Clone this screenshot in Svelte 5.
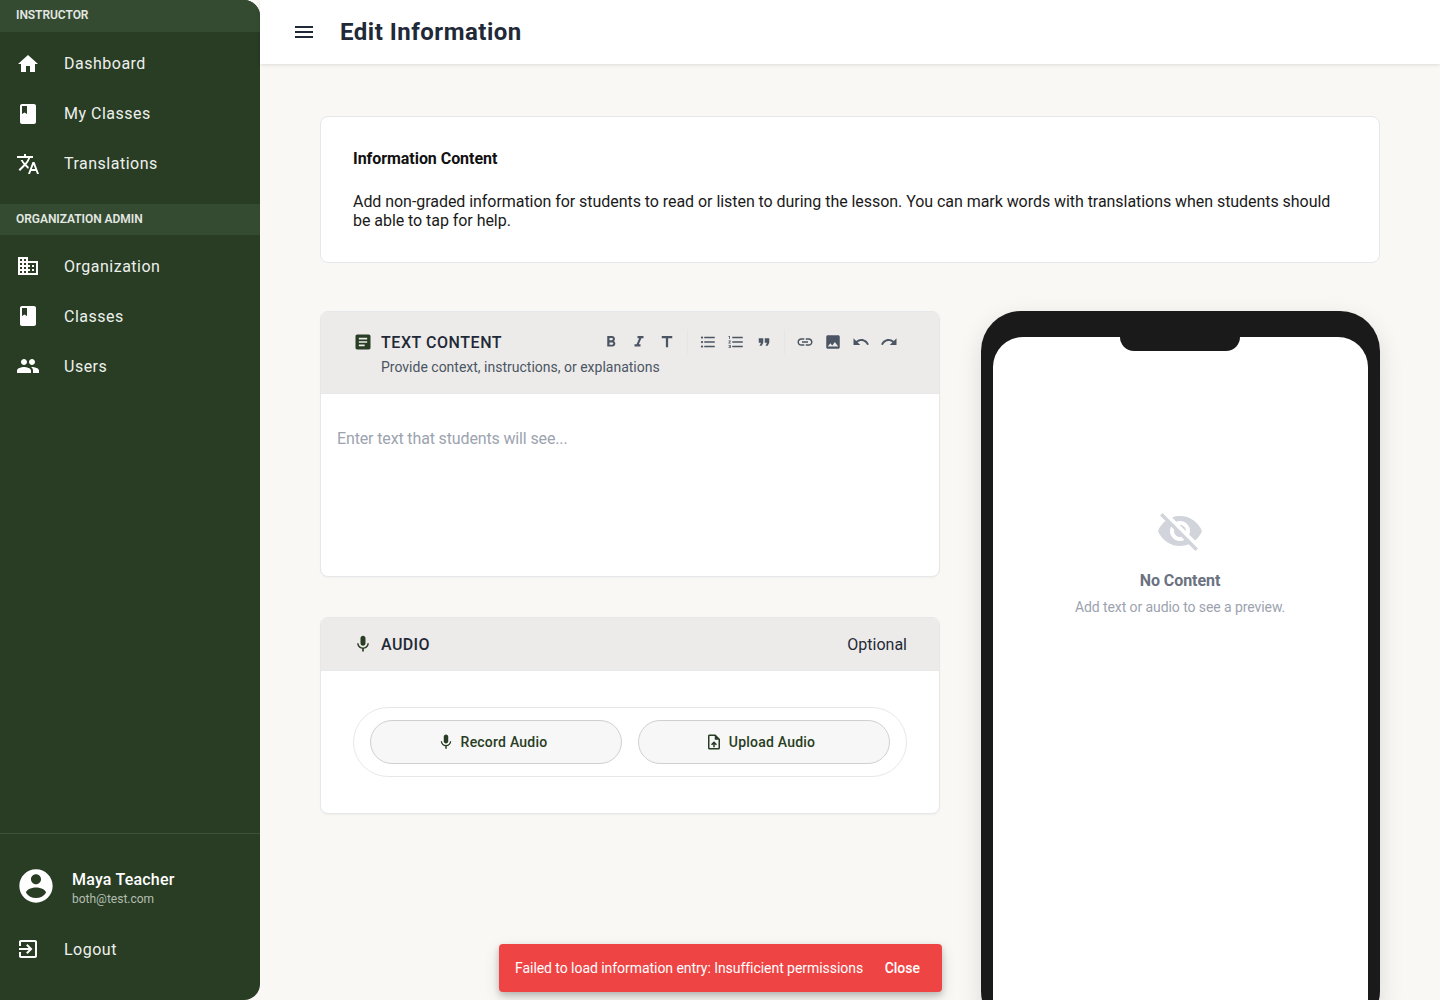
<script>
  const P = {
    home: "M10 20v-6h4v6h5v-8h3L12 3 2 12h3v8z",
    book: "M18 2H6c-1.1 0-2 .9-2 2v16c0 1.1.9 2 2 2h12c1.1 0 2-.9 2-2V4c0-1.1-.9-2-2-2zM6 4h5v8l-2.5-1.5L6 12V4z",
    translate: "M12.87 15.07l-2.54-2.51.03-.03c1.74-1.94 2.98-4.17 3.71-6.53H17V4h-7V2H8v2H1v1.99h11.17C11.5 7.92 10.44 9.75 9 11.35 8.07 10.32 7.3 9.19 6.69 8h-2c.73 1.63 1.73 3.17 2.98 4.56l-5.09 5.02L4 19l5-5 3.11 3.11.76-2.04zM18.5 10h-2L12 22h2l1.12-3h4.75L21 22h2l-4.5-12zm-2.62 7l1.62-4.33L19.12 17h-3.24z",
    domain: "M12 7V3H2v18h20V7H12zM6 19H4v-2h2v2zm0-4H4v-2h2v2zm0-4H4V9h2v2zm0-4H4V5h2v2zm4 12H8v-2h2v2zm0-4H8v-2h2v2zm0-4H8V9h2v2zm0-4H8V5h2v2zm10 12h-8v-2h2v-2h-2v-2h2v-2h-2V9h8v10zm-2-8h-2v2h2v-2zm0 4h-2v2h2v-2z",
    people: "M16 11c1.66 0 2.99-1.34 2.99-3S17.66 5 16 5c-1.66 0-3 1.34-3 3s1.34 3 3 3zm-8 0c1.66 0 2.99-1.34 2.99-3S9.66 5 8 5C6.34 5 5 6.34 5 8s1.34 3 3 3zm0 2c-2.33 0-7 1.17-7 3.5V19h14v-2.5c0-2.33-4.67-3.5-7-3.5zm8 0c-.29 0-.62.02-.97.05 1.16.84 1.97 1.97 1.97 3.45V19h6v-2.5c0-2.33-4.67-3.5-7-3.5z",
    account: "M12 2C6.48 2 2 6.48 2 12s4.48 10 10 10 10-4.48 10-10S17.52 2 12 2zm0 3c1.66 0 3 1.34 3 3s-1.34 3-3 3-3-1.34-3-3 1.34-3 3-3zm0 14.2c-2.5 0-4.71-1.28-6-3.22.03-1.99 4-3.08 6-3.08 1.99 0 5.97 1.09 6 3.08-1.29 1.94-3.5 3.22-6 3.22z",
    exit: "M10.09 15.59L11.5 17l5-5-5-5-1.41 1.41L12.67 11H3v2h9.67l-2.58 2.59zM19 3H5c-1.11 0-2 .9-2 2v4h2V5h14v14H5v-4H3v4c0 1.1.89 2 2 2h14c1.1 0 2-.9 2-2V5c0-1.1-.9-2-2-2z",
    menu: "M3 18h18v-2H3v2zm0-5h18v-2H3v2zm0-7v2h18V6H3z",
    article: "M19 3H5c-1.1 0-2 .9-2 2v14c0 1.1.9 2 2 2h14c1.1 0 2-.9 2-2V5c0-1.1-.9-2-2-2zm-5 14H7v-2h7v2zm3-4H7v-2h10v2zm0-4H7V7h10v2z",
    bold: "M15.6 10.79c.97-.67 1.65-1.77 1.65-2.79 0-2.26-1.75-4-4-4H7v14h7.04c2.09 0 3.71-1.7 3.71-3.79 0-1.52-.86-2.82-2.15-3.42zM10 6.5h3c.83 0 1.5.67 1.5 1.5s-.67 1.5-1.5 1.5h-3v-3zm3.5 9H10v-3h3.5c.83 0 1.5.67 1.5 1.5s-.67 1.5-1.5 1.5z",
    italic: "M10 4v3h2.21l-3.42 8H6v3h8v-3h-2.21l3.42-8H18V4z",
    title: "M5 4v3h5.5v12h3V7H19V4z",
    bullets: "M4 10.5c-.83 0-1.5.67-1.5 1.5s.67 1.5 1.5 1.5 1.5-.67 1.5-1.5-.67-1.5-1.5-1.5zm0-6c-.83 0-1.5.67-1.5 1.5S3.17 7.5 4 7.5 5.5 6.83 5.5 6 4.83 4.5 4 4.5zm0 12c-.83 0-1.5.68-1.5 1.5s.68 1.5 1.5 1.5 1.5-.68 1.5-1.5-.67-1.5-1.5-1.5zM7 19h14v-2H7v2zm0-6h14v-2H7v2zm0-8v2h14V5H7z",
    numbered: "M2 17h2v.5H3v1h1v.5H2v1h3v-4H2v1zm1-9h1V4H2v1h1v3zm-1 3h1.8L2 13.1v.9h3v-1H3.2L5 10.9V10H2v1zm5-6v2h14V5H7zm0 14h14v-2H7v2zm0-6h14v-2H7v2z",
    quote: "M6 17h3l2-4V7H5v6h3zm8 0h3l2-4V7h-6v6h3z",
    link: "M3.9 12c0-1.71 1.39-3.1 3.1-3.1h4V7H7c-2.76 0-5 2.24-5 5s2.24 5 5 5h4v-1.9H7c-1.71 0-3.1-1.39-3.1-3.1zM8 13h8v-2H8v2zm9-6h-4v1.9h4c1.71 0 3.1 1.39 3.1 3.1s-1.39 3.1-3.1 3.1h-4V17h4c2.76 0 5-2.24 5-5s-2.24-5-5-5z",
    image: "M21 19V5c0-1.1-.9-2-2-2H5c-1.1 0-2 .9-2 2v14c0 1.1.9 2 2 2h14c1.1 0 2-.9 2-2zM8.5 13.5l2.5 3.01L14.5 12l4.5 6H5l3.5-4.5z",
    undo: "M12.5 8c-2.65 0-5.05.99-6.9 2.6L2 7v9h9l-3.62-3.62c1.39-1.16 3.16-1.88 5.12-1.88 3.54 0 6.55 2.31 7.6 5.5l2.37-.78C21.08 11.03 17.15 8 12.5 8z",
    redo: "M18.4 10.6C16.55 8.99 14.15 8 11.5 8c-4.65 0-8.58 3.03-9.96 7.22L3.9 16c1.05-3.19 4.05-5.5 7.6-5.5 1.95 0 3.73.72 5.12 1.88L13 16h9V7l-3.6 3.6z",
    mic: "M12 14c1.66 0 2.99-1.34 2.99-3L15 5c0-1.66-1.34-3-3-3S9 3.34 9 5v6c0 1.66 1.34 3 3 3zm5.3-3c0 3-2.54 5.1-5.3 5.1S6.7 14 6.7 11H5c0 3.41 2.72 6.23 6 6.72V21h2v-3.28c3.28-.48 6-3.3 6-6.72h-1.7z",
    upload: "M14 2H6c-1.1 0-1.99.9-1.99 2L4 20c0 1.1.89 2 1.99 2H18c1.1 0 2-.9 2-2V8l-6-6zm4 18H6V4h7v5h5v11zM8 15.01l1.41 1.41L11 14.84V19h2v-4.16l1.59 1.59L16 15.01 12.01 11 8 15.01z",
    eyeoff: "M12 7c2.76 0 5 2.24 5 5 0 .65-.13 1.26-.36 1.83l2.92 2.92c1.51-1.26 2.7-2.89 3.43-4.75-1.73-4.39-6-7.5-11-7.5-1.4 0-2.74.25-3.98.7l2.16 2.16C10.74 7.13 11.35 7 12 7zM2 4.27l2.28 2.28.46.46C3.08 8.3 1.78 10.02 1 12c1.73 4.39 6 7.5 11 7.5 1.55 0 3.03-.3 4.38-.84l.42.42L19.73 22 21 20.73 3.27 3 2 4.27zM7.53 9.8l1.55 1.55c-.05.21-.08.43-.08.65 0 1.66 1.34 3 3 3 .22 0 .44-.03.65-.08l1.55 1.55c-.67.33-1.41.53-2.2.53-2.76 0-5-2.24-5-5 0-.79.2-1.53.53-2.2zm4.31-.78l3.15 3.15.02-.16c0-1.66-1.34-3-3-3l-.17.01z"
  };
  const instructor = [["home","Dashboard"],["book","My Classes"],["translate","Translations"]];
  const admin = [["domain","Organization"],["book","Classes"],["people","Users"]];
  const tools = [["bold","italic","title"],["bullets","numbered","quote"],["link","image","undo","redo"]];
</script>

{#snippet icon(name, size, cls)}
  <svg class={cls} width={size} height={size} viewBox="0 0 24 24" fill="currentColor" aria-hidden="true"><path d={P[name]} /></svg>
{/snippet}

<div class="app">
  <aside class="side">
    <div class="sect">INSTRUCTOR</div>
    <nav class="list first">
      {#each instructor as [i, label]}
        <div class="item">{@render icon(i, 24, "ni")}<span>{label}</span></div>
      {/each}
    </nav>
    <div class="sect">ORGANIZATION ADMIN</div>
    <nav class="list">
      {#each admin as [i, label]}
        <div class="item">{@render icon(i, 24, "ni")}<span>{label}</span></div>
      {/each}
    </nav>
    <div class="foot">
      <div class="profile">
        {@render icon("account", 40, "avatar")}
        <div class="who">
          <div class="name">Maya Teacher</div>
          <div class="mail">both@test.com</div>
        </div>
      </div>
      <div class="item">{@render icon("exit", 24, "ni")}<span>Logout</span></div>
    </div>
  </aside>

  <div class="main">
    <header class="top">
      {@render icon("menu", 24, "burger")}
      <h1>Edit Information</h1>
    </header>
    <div class="content">
      <section class="intro">
        <h2>Information Content</h2>
        <p>Add non-graded information for students to read or listen to during the lesson. You can mark words with translations when students should be able to tap for help.</p>
      </section>
      <div class="cols">
        <div class="left">
          <section class="card">
            <div class="chead text">
              <div class="crow">
                {@render icon("article", 20, "cicon")}
                <span class="ctitle">TEXT CONTENT</span>
                <div class="tools">
                  {#each tools as group}
                    <div class="group">
                      {#each group as t}
                        <span class="tool">{@render icon(t, 18, "")}</span>
                      {/each}
                    </div>
                  {/each}
                </div>
              </div>
              <div class="csub">Provide context, instructions, or explanations</div>
            </div>
            <div class="editor">Enter text that students will see...</div>
          </section>
          <section class="card">
            <div class="chead audio">
              {@render icon("mic", 20, "cicon")}
              <span class="ctitle">AUDIO</span>
              <span class="opt">Optional</span>
            </div>
            <div class="abody">
              <div class="pill">
                <button>{@render icon("mic", 18, "")}Record Audio</button>
                <button>{@render icon("upload", 18, "")}Upload Audio</button>
              </div>
            </div>
          </section>
        </div>
        <div class="phone">
          <div class="screen">
            <div class="notch"></div>
            <div class="empty">
              {@render icon("eyeoff", 48, "eye")}
              <div class="nc">No Content</div>
              <div class="ns">Add text or audio to see a preview.</div>
            </div>
          </div>
        </div>
      </div>
    </div>
  </div>

  <div class="snack">
    <span>Failed to load information entry: Insufficient permissions</span>
    <b>Close</b>
  </div>
</div>

<style>
  :global(body) { margin: 0; font-family: Roboto, "Liberation Sans", sans-serif; }
  .app { display: flex; height: 1000px; overflow: hidden; background: #faf8f5; position: relative; }
  .side { width: 260px; flex: none; background: #283d24; color: #fff; border-radius: 0 16px 16px 0; display: flex; flex-direction: column; overflow: hidden; }
  .sect { height: 31.5px; line-height: 30px; padding-left: 16px; background: #344b31; color: #e3e8e2; font-size: 12px; font-weight: 600; letter-spacing: -0.05px; flex: none; }
  .list { padding: 6px 0 16px; }
  .list.first { padding: 7px 0 15px; }
  .item { height: 50px; display: flex; align-items: center; padding-left: 16px; gap: 24px; font-size: 16px; letter-spacing: 0.5px; color: #eef0ed; }
  :global(.ni) { flex: none; color: #fff; }
  .foot { margin-top: auto; border-top: 1px solid #3d5239; padding: 26px 0 26px; }
  .profile { display: flex; align-items: center; padding-left: 16px; gap: 16px; height: 52px; margin-bottom: 12px; }
  .who { padding-top: 6px; }
  .name { font-size: 16px; font-weight: 500; line-height: 20px; letter-spacing: 0.2px; }
  .mail { font-size: 12px; line-height: 18px; color: #b4bdb2; }
  .main { flex: 1; min-width: 0; display: flex; flex-direction: column; }
  .top { height: 64px; flex: none; background: #fff; display: flex; align-items: center; padding-left: 32px; gap: 24px; box-shadow: 0 1px 4px rgba(0,0,0,.12); color: #1f2937; position: relative; }
  h1 { margin: 0; font-size: 24px; font-weight: 700; letter-spacing: 0.5px; }
  .content { padding: 52px 60px 0; }
  .intro { background: #fff; border: 1px solid #e5e7eb; border-radius: 8px; padding: 32px; box-sizing: border-box; height: 147px; margin-bottom: 48px; color: #1a1a1a; }
  h2 { margin: 0 0 24px; font-size: 16px; font-weight: 700; line-height: 19px; letter-spacing: -0.05px; color: #111; }
  p { margin: 0; font-size: 16px; line-height: 19px; letter-spacing: -0.05px; }
  .cols { display: grid; grid-template-columns: 620px 399px; column-gap: 41px; align-items: start; }
  .left { display: flex; flex-direction: column; gap: 40px; }
  .card { background: #fff; border: 1px solid #e5e7eb; border-radius: 8px; overflow: hidden; box-shadow: 0 1px 2px rgba(0,0,0,.04); box-sizing: border-box; }
  .card:first-child { height: 266px; }
  .card:last-child { height: 197px; }
  .chead { background: #ecebe9; color: #1f2937; }
  .chead.text { height: 82px; padding: 18px 36px 0 32px; box-sizing: border-box; border-bottom: 1px solid #e8e8e8; }
  .crow { display: flex; align-items: center; height: 24px; }
  :global(.cicon) { color: #283d24; flex: none; margin-right: 8px; }
  .ctitle { font-size: 16px; font-weight: 500; letter-spacing: 0.55px; }
  .audio .ctitle { letter-spacing: 0.4px; }
  .tools { margin-left: auto; display: flex; }
  .group { display: flex; }
  .group + .group { margin-left: 6px; padding-left: 6px; border-left: 1px solid #e6e5e3; }
  .tool { width: 28px; height: 24px; display: flex; align-items: center; justify-content: center; color: #4b5563; }
  .csub { font-size: 14px; line-height: 20px; color: #4b5563; margin: 3px 0 0 28px; }
  .editor { padding: 35px 16px 0; font-size: 16px; line-height: 19px; color: #9ca3af; letter-spacing: -0.14px; }
  .chead.audio { height: 53px; display: flex; align-items: center; padding: 0 32px 0 32px; box-sizing: border-box; border-bottom: 1px solid #e8e8e8; }
  .opt { margin-left: auto; font-size: 16px; }
  .abody { padding: 36px 32px; }
  .pill { height: 70px; box-sizing: border-box; border: 1px solid #e7e7e7; border-radius: 35px; padding: 12px 16px; display: grid; grid-template-columns: 1fr 1fr; gap: 16px; }
  button { height: 44px; border: 1px solid #cfcfcf; border-radius: 22px; background: #f7f7f7; color: #283d24; font: 500 14px Roboto, sans-serif; letter-spacing: 0.22px; display: flex; align-items: center; justify-content: center; gap: 6px; padding: 0 8px 0 0; }
  .phone { height: 720px; background: #1a1a1a; border-radius: 40px; padding: 26px 12px 0; box-sizing: border-box; box-shadow: 0 8px 24px rgba(0,0,0,.12); }
  .screen { background: #fff; height: 100%; border-radius: 30px 30px 0 0; position: relative; }
  .notch { position: absolute; top: 0; left: 127px; width: 120px; height: 14px; background: #1a1a1a; border-radius: 0 0 16px 16px; }
  .empty { display: flex; flex-direction: column; align-items: center; padding: 170px 1px 0 0; }
  :global(.eye) { color: #d1d5db; }
  .nc { margin-top: 16px; font-size: 16px; font-weight: 700; letter-spacing: -0.05px; color: #6b7280; line-height: 19px; }
  .ns { margin-top: 9px; font-size: 14px; color: #9ca3af; line-height: 17px; letter-spacing: -0.08px; }
  .snack { position: absolute; left: 499px; top: 944px; width: 443px; height: 48px; box-sizing: border-box; background: #ef4444; border-radius: 4px; color: #fff; display: flex; align-items: center; padding: 0 22px 0 16px; justify-content: space-between; font-size: 14px; box-shadow: 0 3px 6px rgba(0,0,0,.2), 0 6px 16px rgba(0,0,0,.12); }
  .snack span { letter-spacing: -0.05px; }
  .snack b { font-weight: 500; }
</style>
